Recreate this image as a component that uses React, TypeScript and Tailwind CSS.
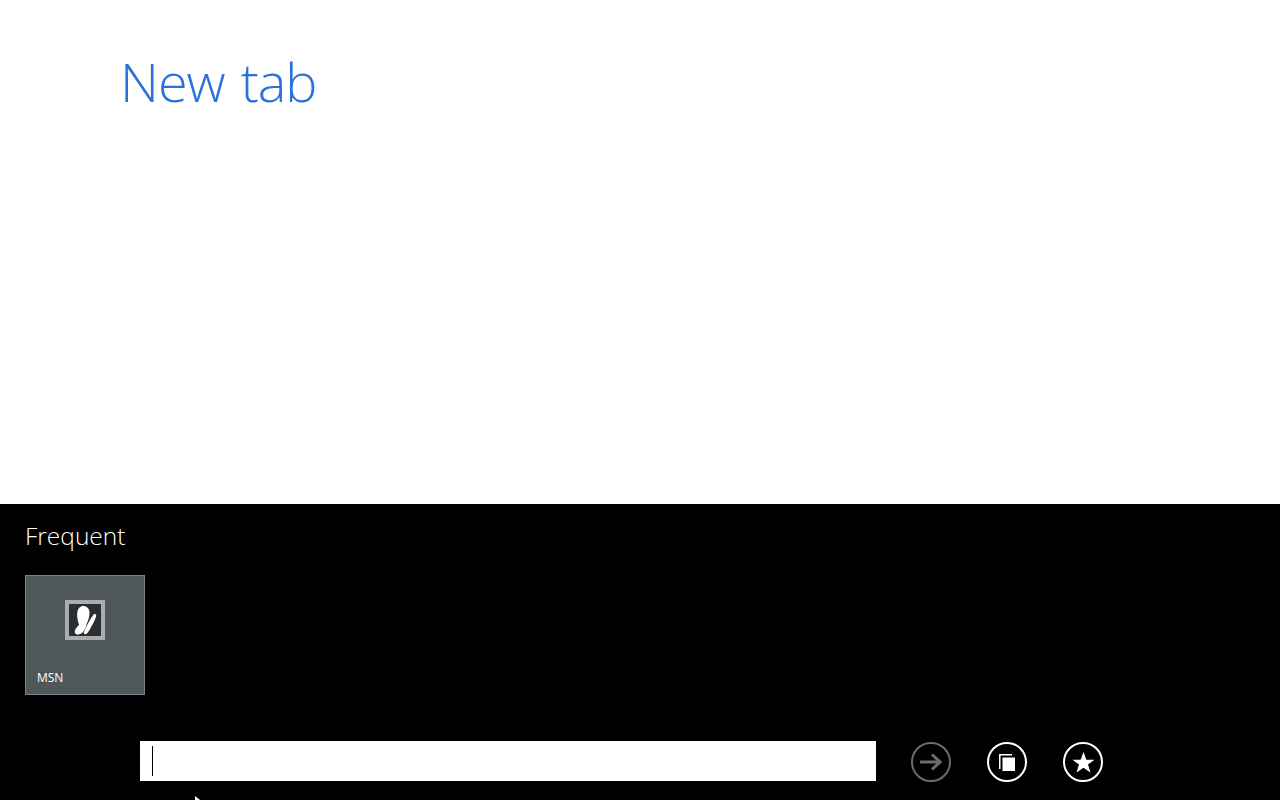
import React from "react";

const font = { fontFamily: '"Open Sans", "Noto Sans", sans-serif' };

const App: React.FC = () => {
  return (
    <div className="relative flex h-[800px] w-[1280px] flex-col overflow-hidden bg-black" style={font}>
      {/* Header */}
      <div className="h-[504px] bg-white pl-[120px] pt-[45px]">
        <h1 className="text-[54px] font-light leading-[72px] tracking-[-1px] [word-spacing:3px] text-[#2a72d8]">New tab</h1>
      </div>

      {/* Frequent section */}
      <div className="flex-1 px-[25px] pt-[18px]">
        <h2 className="text-[24.5px] font-light leading-[28px] text-white">Frequent</h2>
        <div className="mt-[25px] flex h-[120px] w-[120px] flex-col border border-[#7d8386] bg-[#50575b] pl-[11px]">
          <div className="ml-[28px] mt-[24px] flex h-[40px] w-[40px] items-center justify-center border-[4px] border-[#a9adae] bg-[#2c2f31]">
            <svg width="32" height="32" viewBox="0 0 32 32" fill="#fff">
              <path d="M12 2.500C16 1 20.500 3.500 20.500 8.500C20.500 13 19 17 17.500 20.500C16.500 25 14 30 9.500 30.500C6 31 5 28 6.500 25C8 22.500 10 21.500 10 20.500C8 15 6.500 5 12 2.500Z" />
              <path d="M25 10C27.500 9.500 27.500 11.500 27 13C25 18 21 26 18 29.500C16 31 14 30 15 28C17.500 22 21 15 25 10Z" />
            </svg>
          </div>
          <span className="mt-[30px] text-[12px] leading-[16px] text-white">MSN</span>
        </div>

        {/* Address bar */}
        <div className="mt-[45px] flex items-center pl-[115px]">
          <div className="flex h-[40px] w-[736px] items-center bg-white pl-[12px]">
            <div className="h-[30px] w-px bg-black" />
          </div>
          <div className="ml-[35px] flex items-center gap-[36px] pt-[2px]">
            <button className="flex h-[40px] w-[40px] items-center justify-center rounded-full border-[2.5px] border-[#6b6b6b]">
              <svg width="22" height="18" viewBox="0 0 22 18" fill="none" stroke="#6e6e6e" strokeWidth="3">
                <path d="M0 9H20" />
                <path d="M12 1.500L20 9L12 16.500" />
              </svg>
            </button>
            <button className="flex h-[40px] w-[40px] items-center justify-center rounded-full border-[2.5px] border-white">
              <svg width="16" height="17" viewBox="0 0 16 17" fill="#fff">
                <path d="M0 0H13V1.500H1.500V15H0Z" />
                <path d="M3.500 3.500H16V17H3.500Z" />
              </svg>
            </button>
            <button className="flex h-[40px] w-[40px] items-center justify-center rounded-full border-[2.5px] border-white">
              <svg width="23" height="23" viewBox="0 0 24 24" fill="#fff">
                <path d="M12 1L15 9H23.500L16.700 14.200L19.300 22.500L12 17.400L4.700 22.500L7.300 14.200L0.500 9H9Z" />
              </svg>
            </button>
          </div>
        </div>
      </div>

      {/* Mouse pointer, cut off by the bottom edge */}
      <svg className="absolute left-[194px] top-[795px]" width="8" height="5" viewBox="0 0 8 5">
        <path d="M1 1L6 5H1Z" fill="#fff" />
      </svg>
    </div>
  );
};

export default App;
